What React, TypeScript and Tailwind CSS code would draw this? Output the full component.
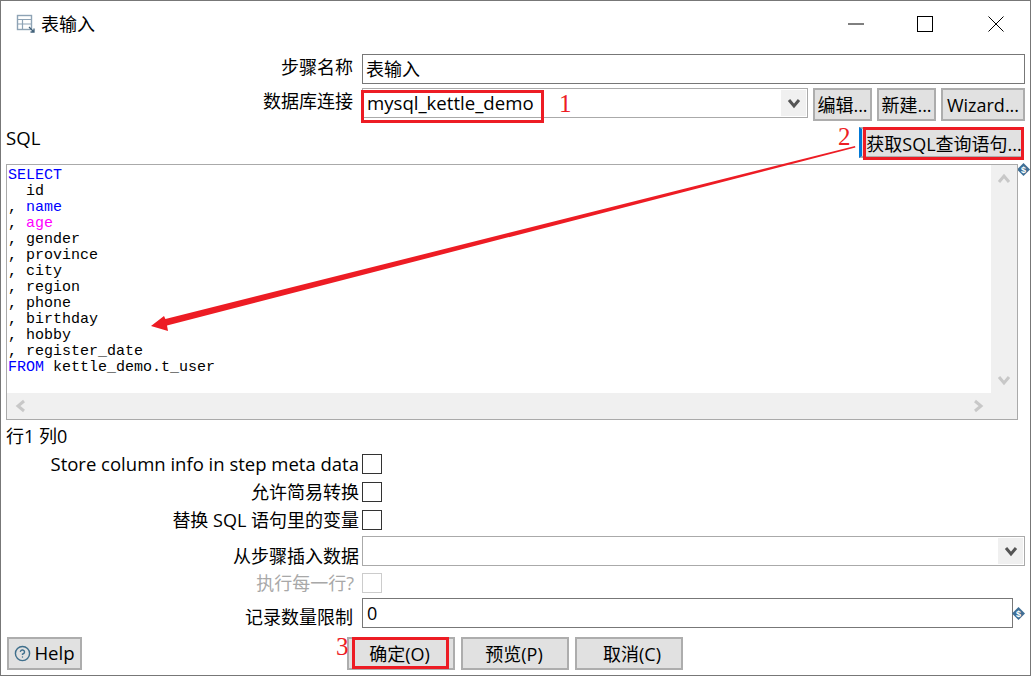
import React from 'react';
import { CircleHelp } from 'lucide-react';

const uiFont = "font-['Open_Sans','Noto_Sans_CJK_SC',sans-serif]";

const Chevron = ({ dir, color, size = 14 }: { dir: 'up' | 'down' | 'left' | 'right'; color: string; size?: number }) => {
    const points = {
        up: '2,10 7,4 12,10',
        down: '2,4 7,10 12,4',
        left: '10,2 4,7 10,12',
        right: '4,2 10,7 4,12',
    };
    return (
        <svg width={size} height={size} viewBox="0 0 14 14">
            <polyline points={points[dir]} fill="none" stroke={color} strokeWidth="3" />
        </svg>
    );
};

const VarIcon = () => (
    <svg width="13" height="13" viewBox="0 0 13 13" className="shrink-0">
        <polygon points="6.5,0 13,6.5 6.5,13 0,6.5" fill="#3f6f96" />
        <text x="6.5" y="9.7" textAnchor="middle" fontSize="9" fontWeight="700" fill="#fff" fontFamily="Liberation Sans">$</text>
    </svg>
);

const Button = ({ label, className }: { label: React.ReactNode; className: string }) => (
    <button className={`flex items-center justify-center border-2 border-[#adadad] bg-[#e1e1e1] text-[18px] leading-none text-black ${className}`}>
        {label}
    </button>
);

const Checkbox = ({ disabled }: { disabled?: boolean }) => (
    <span className={`ml-[3px] block h-5 w-5 border bg-white ${disabled ? 'border-[#cccccc]' : 'border-[#333333]'}`} />
);

const Row = ({ label, muted, className, labelClass = 'text-[18px]', children }: { label: string; muted?: boolean; className: string; labelClass?: string; children: React.ReactNode }) => (
    <div className={`flex items-center ${className}`}>
        <span className={`w-[358px] shrink-0 whitespace-nowrap text-right leading-none ${muted ? 'text-[#a8a8a8]' : 'text-black'} ${labelClass}`}>
            {label}
        </span>
        {children}
    </div>
);

const sqlLines: { head?: string; text: string; color?: string }[] = [
    { text: 'SELECT', color: 'text-[#0000ff]' },
    { text: '  id' },
    { head: ', ', text: 'name', color: 'text-[#0000ff]' },
    { head: ', ', text: 'age', color: 'text-[#ff00ff]' },
    { text: ', gender' },
    { text: ', province' },
    { text: ', city' },
    { text: ', region' },
    { text: ', phone' },
    { text: ', birthday' },
    { text: ', hobby' },
    { text: ', register_date' },
];

export default function App() {
    return (
        <div className={`relative flex h-[676px] w-[1031px] flex-col overflow-hidden border border-[#777777] bg-white ${uiFont}`}>
            {/* title bar */}
            <div className="flex h-[45px] shrink-0 items-center pl-[15px]">
                <svg width="20" height="20" viewBox="0 0 20 20" className="mr-[5px]">
                    <rect x="1.5" y="1.5" width="14" height="14" fill="none" stroke="#8ea3b5" strokeWidth="1.4" />
                    <path d="M1 5.5H16M1 10H16M6.5 5.5V15.5" stroke="#8ea3b5" strokeWidth="1.2" fill="none" />
                    <path d="M13 13L18 18M18 14.5V18H14.5" stroke="#3f5f78" strokeWidth="1.3" fill="none" />
                </svg>
                <span className="text-[18px] leading-none text-black">表输入</span>
                <div className="ml-auto flex items-center">
                    <svg width="16" height="16" viewBox="0 0 16 16" className="mr-[53px]">
                        <path d="M0 8H16" stroke="#000" strokeWidth="1" />
                    </svg>
                    <svg width="16" height="16" viewBox="0 0 16 16" className="mr-[55px]">
                        <rect x="0.5" y="0.5" width="15" height="15" fill="none" stroke="#000" strokeWidth="1" />
                    </svg>
                    <svg width="16" height="16" viewBox="0 0 16 16" className="mr-[26px]">
                        <path d="M0.5 0.5L15.5 15.5M15.5 0.5L0.5 15.5" stroke="#000" strokeWidth="1" />
                    </svg>
                </div>
            </div>

            {/* step name */}
            <div className="mt-2 flex h-[30px] shrink-0 items-center">
                <span className="w-[352px] shrink-0 pb-1 text-right text-[18px] leading-none">步骤名称</span>
                <div className="ml-[9px] flex h-full w-[663px] items-center border border-[#777777] pl-[3px] text-[18px]">表输入</div>
            </div>

            {/* database connection */}
            <div className="mt-[4px] flex h-[32px] shrink-0 items-start">
                <span className="mt-[4px] w-[352px] shrink-0 text-right text-[18px] leading-none">数据库连接</span>
                <div className="ml-[9px] flex h-[30px] w-[446px] items-center justify-between border border-[#aaaaaa] pl-[4px] pr-[1px] text-[18.6px]">
                    <span>mysql_kettle_demo</span>
                    <span className="flex h-[26px] w-[25px] items-center justify-center bg-[#f0f0f0]">
                        <Chevron dir="down" color="#555555" />
                    </span>
                </div>
                <Button label="编辑..." className="ml-[5px] h-[33px] w-[59px]" />
                <Button label="新建..." className="ml-[5px] h-[33px] w-[59px]" />
                <Button label="Wizard..." className="ml-[5px] h-[33px] w-[84px]" />
            </div>

            {/* sql heading */}
            <div className="flex h-[44px] shrink-0 items-start justify-between pl-[5px] pr-[6px] pt-[7px]">
                <span className="mt-[2px] text-[18.6px] leading-none">SQL</span>
                <button className="flex h-[31px] w-[165px] items-center justify-center whitespace-nowrap border-2 border-l-[3px] border-[#adadad] border-l-[#0078d7] bg-[#e1e1e1] pl-1 pt-[2px] text-[18px] leading-none">
                    获取SQL查询语句...
                </button>
            </div>

            {/* sql editor */}
            <div className="flex shrink-0 items-start pl-[5px]">
                <div className="relative h-[256px] w-[1012px] border border-[#aaaaaa]">
                    <pre className="h-[228px] w-[983px] whitespace-pre pl-[1px] pt-[3px] font-['Liberation_Mono',monospace] text-[15px] leading-[16px] text-black">
                        {sqlLines.map((line) => (
                            <div key={line.text} className={line.head ? '' : line.color}>
                                {line.head}
                                {line.head ? <span className={line.color}>{line.text}</span> : line.text}
                            </div>
                        ))}
                        <div>
                            <span className="text-[#0000ff]">FROM</span> kettle_demo.t_user
                        </div>
                    </pre>
                    <div className="absolute bottom-0 right-0 top-0 flex w-[26px] flex-col items-center justify-between bg-[#f0f0f0] pb-[32px] pt-[7px]">
                        <Chevron dir="up" color="#c8c8c8" />
                        <Chevron dir="down" color="#c8c8c8" />
                    </div>
                    <div className="absolute bottom-0 left-0 right-0 flex h-[26px] items-center justify-between bg-[#f0f0f0] pl-[7px] pr-[32px]">
                        <Chevron dir="left" color="#c8c8c8" />
                        <Chevron dir="right" color="#c8c8c8" />
                    </div>
                </div>
                <div className="ml-[-1px] mt-[-1px]">
                    <VarIcon />
                </div>
            </div>

            <div className="flex h-[30px] shrink-0 items-center pl-[5px] pt-[2px] text-[18px] leading-none">行1 列0</div>

            {/* options */}
            <div className="flex shrink-0 flex-col">
                <Row label="Store column info in step meta data" labelClass="text-[18.5px]" className="h-[28px]"><Checkbox /></Row>
                <Row label="允许简易转换" className="h-[28px]"><Checkbox /></Row>
                <Row label="替换 SQL 语句里的变量" className="h-[28px]"><Checkbox /></Row>
                <Row label="从步骤插入数据" labelClass="pt-[9px] text-[18px]" className="mt-[2px] h-[30px]">
                    <div className="ml-[3px] flex h-[30px] w-[663px] items-center justify-end border border-[#aaaaaa] pr-[1px]">
                        <span className="flex h-[26px] w-[25px] items-center justify-center bg-[#f0f0f0]">
                            <Chevron dir="down" color="#555555" />
                        </span>
                    </div>
                </Row>
                <Row label="执行每一行?" muted labelClass="pr-[5px] text-[18px]" className="mt-[2px] h-[30px]"><Checkbox disabled /></Row>
                <div className="flex h-[30px] items-center">
                    <span className="w-[352px] shrink-0 pt-[7px] text-right text-[18px] leading-none">记录数量限制</span>
                    <div className="ml-[9px] flex h-full w-[651px] items-center border border-[#777777] pl-1 text-[18px]">0</div>
                    <div className="ml-[-1px]"><VarIcon /></div>
                </div>
            </div>

            {/* footer */}
            <div className="relative mt-[9px] flex h-[33px] shrink-0 justify-center">
                <button className="absolute left-[6px] top-0 flex h-[33px] w-[75px] items-center justify-center gap-[3px] border-2 border-[#adadad] bg-[#e1e1e1] text-[18.6px] leading-none">
                    <CircleHelp size={17} color="#3f6f8c" strokeWidth={2} />
                    Help
                </button>
                <div className="ml-[-1px] flex gap-[6px]">
                    <Button label="确定(O)" className="h-[33px] w-[108px] pr-[3px]" />
                    <Button label="预览(P)" className="h-[33px] w-[108px] pr-[2px]" />
                    <Button label="取消(C)" className="h-[33px] w-[108px] pl-[6px]" />
                </div>
            </div>

            {/* red annotations over the screenshot */}
            <div className="absolute left-[360px] top-[89px] h-[33px] w-[183px] border-[3px] border-[#ed1c24]" />
            <div className="absolute left-[862px] top-[126px] h-[33px] w-[161px] border-[3px] border-[#ed1c24]" />
            <div className="absolute left-[351px] top-[636px] h-[32px] w-[97px] border-[3px] border-[#ed1c24]" />
            <span className="absolute left-[558px] top-[89px] font-['Liberation_Serif',serif] text-[25px] leading-[28px] text-[#ed1c24]">1</span>
            <span className="absolute left-[837px] top-[122px] font-['Liberation_Serif',serif] text-[25px] leading-[28px] text-[#ed1c24]">2</span>
            <span className="absolute left-[335px] top-[632px] font-['Liberation_Serif',serif] text-[25px] leading-[28px] text-[#ed1c24]">3</span>
            <svg width="1031" height="676" viewBox="0 0 1031 676" className="pointer-events-none absolute left-[-1px] top-[-1px]">
                <polygon points="855,146 855.4,147.6 167,325.5 168,331 151,326 164,316 165.4,319" fill="#ed1c24" />
            </svg>
        </div>
    );
}
